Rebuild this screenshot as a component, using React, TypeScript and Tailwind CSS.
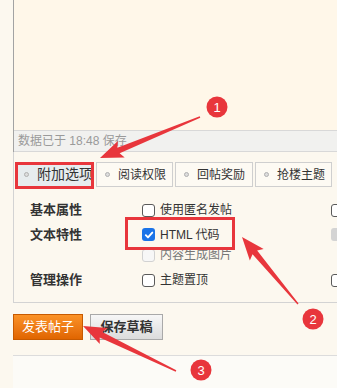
import React from "react";

type Pt = [number, number];

// tapered annotation arrow, thin at the tail, wide head at the tip
function arrowPoints(tail: Pt, tip: Pt) {
  const dx = tip[0] - tail[0];
  const dy = tip[1] - tail[1];
  const len = Math.hypot(dx, dy);
  const ux = dx / len;
  const uy = dy / len;
  const nx = -uy;
  const ny = ux;
  const head = 20;
  const neck: Pt = [tip[0] - ux * head, tip[1] - uy * head];
  const barb: Pt = [tip[0] - ux * (head + 3), tip[1] - uy * (head + 3)];
  const p = (b: Pt, w: number): string => `${b[0] + nx * w},${b[1] + ny * w}`;
  return [
    p(tail, 0.7),
    p(neck, 3),
    p(barb, 9),
    `${tip[0]},${tip[1]}`,
    p(barb, -9),
    p(neck, -3),
    p(tail, -0.7),
  ].join(" ");
}

function Box({ checked, disabled, grey }: { checked?: boolean; disabled?: boolean; grey?: boolean }) {
  if (checked) {
    return (
      <span className="flex h-[13px] w-[13px] shrink-0 items-center justify-center rounded-[3px] bg-[#1a73e8]">
        <svg width="10" height="10" viewBox="0 0 10 10">
          <path d="M1.8 5.2 L4 7.4 L8.3 2.6" fill="none" stroke="#fff" strokeWidth="1.9" strokeLinecap="round" strokeLinejoin="round" />
        </svg>
      </span>
    );
  }
  if (grey) {
    return <span className="h-[13px] w-[13px] shrink-0 rounded-[3px] bg-[#d4d4d4]" />;
  }
  return (
    <span
      className={
        disabled
          ? "h-[13px] w-[13px] shrink-0 rounded-[3px] border border-[#d2d2d2] bg-[#f7f7f7]"
          : "h-[13px] w-[13px] shrink-0 rounded-[3px] border border-[#5a5a5a] bg-white"
      }
    />
  );
}

function Tab({ label, active, w }: { label: string; active?: boolean; w: string }) {
  return (
    <div
      className={`flex h-full items-center border border-[#cfcfcf] pl-[8px] ${w} ${
        active ? "bg-[#e7ecee] text-[14px]" : "bg-[#fdfaf3] text-[12px]"
      } text-[#333]`}
    >
      <span className="mr-[8px] h-[5px] w-[5px] rounded-full border border-[#b0b0b0] bg-[#dcdcdc]" />
      {label}
    </div>
  );
}

function Row({ label, text, box, right, h, textClass }: {
  label?: string;
  text: string;
  box: React.ReactNode;
  right?: React.ReactNode;
  h: string;
  textClass?: string;
}) {
  return (
    <div className={`flex items-center ${h}`}>
      <div className="w-[128px] shrink-0 pl-[16px] text-[13px] font-bold text-[#333]">{label}</div>
      <div className="flex w-[189px] shrink-0 items-center gap-[5px]">
        {box}
        <span className={`text-[12px] ${textClass ?? "text-[#333]"}`}>{text}</span>
      </div>
      {right}
    </div>
  );
}

export default function App() {
  const red = "#e8363c";
  return (
    <div className="relative h-[388px] w-[337px] overflow-hidden bg-[#fcf8ef] font-['Liberation_Sans','Noto_Sans_CJK_SC',sans-serif]">
      {/* editor */}
      <div className="ml-[13px] border-l border-[#a3a3a3]">
        <div className="h-[130px] bg-[#fff7e9]" />
        <div className="flex h-[22px] items-center border-y border-[#d8d8d8] bg-[#f1f1ef] pl-[4px] text-[12px] text-[#9a9a9a]">
          数据已于 18:48 保存
        </div>
      </div>

      {/* options panel */}
      <div className="ml-[13px] border-b border-l border-[#d3d3d3] pb-[10px] pt-[10px]">
        <div className="flex h-[25px] gap-[2px] pl-[1px]">
          <Tab label="附加选项" active w="w-[79px]" />
          <Tab label="阅读权限" w="w-[77px]" />
          <Tab label="回帖奖励" w="w-[78px]" />
          <Tab label="抢楼主题" w="w-[77px]" />
        </div>
        <div className="mt-[11px]">
          <Row label="基本属性" text="使用匿名发帖" box={<Box />} right={<Box />} h="h-[24px]" />
          <Row label="文本特性" text="HTML 代码" box={<Box checked />} right={<Box grey />} h="h-[25px]" />
          <Row text="内容生成图片" box={<Box disabled />} h="h-[16px]" textClass="text-[#777]" />
          <div className="h-[5px]" />
          <Row label="管理操作" text="主题置顶" box={<Box />} right={<Box />} h="h-[24px]" />
        </div>
      </div>

      {/* buttons */}
      <div className="ml-[13px] mt-[11px] flex items-start gap-[7px]">
        <button className="flex h-[26px] w-[70px] items-center justify-center border border-[#c75a00] bg-gradient-to-b from-[#fb9226] to-[#e06500] text-[13px] text-white">
          发表帖子
        </button>
        <button className="flex h-[26px] w-[73px] items-center justify-center border border-[#a9a9a9] bg-gradient-to-b from-[#f7f7f7] to-[#dcdcdc] text-[13px] font-bold text-[#333]">
          保存草稿
        </button>
      </div>
      <div className="ml-[13px] mt-[15px] h-[33px] border-t border-[#dcdcdc] bg-[#fcfbf7]" />
      <div className="h-[2px] bg-[#555]" />

      {/* annotations */}
      <svg className="pointer-events-none absolute left-0 top-0" width="337" height="388">
        <rect x="16.5" y="163.5" width="76" height="24" fill="none" stroke={red} strokeWidth="3" />
        <rect x="126.5" y="218.5" width="107" height="30" fill="none" stroke={red} strokeWidth="3" />
        <polygon points={arrowPoints([200, 117], [100, 158])} fill={red} />
        <polygon points={arrowPoints([298, 304], [242, 237])} fill={red} />
        <polygon points={arrowPoints([176, 371], [83, 326])} fill={red} />
        {[
          { x: 217, y: 107, n: "1" },
          { x: 313, y: 319, n: "2" },
          { x: 201, y: 370, n: "3" },
        ].map((c) => (
          <g key={c.n}>
            <circle cx={c.x} cy={c.y} r="10.5" fill={red} />
            <text x={c.x} y={c.y + 4.5} textAnchor="middle" fontSize="13" fill="#fff" fontFamily="Liberation Sans, sans-serif">
              {c.n}
            </text>
          </g>
        ))}
      </svg>
    </div>
  );
}
